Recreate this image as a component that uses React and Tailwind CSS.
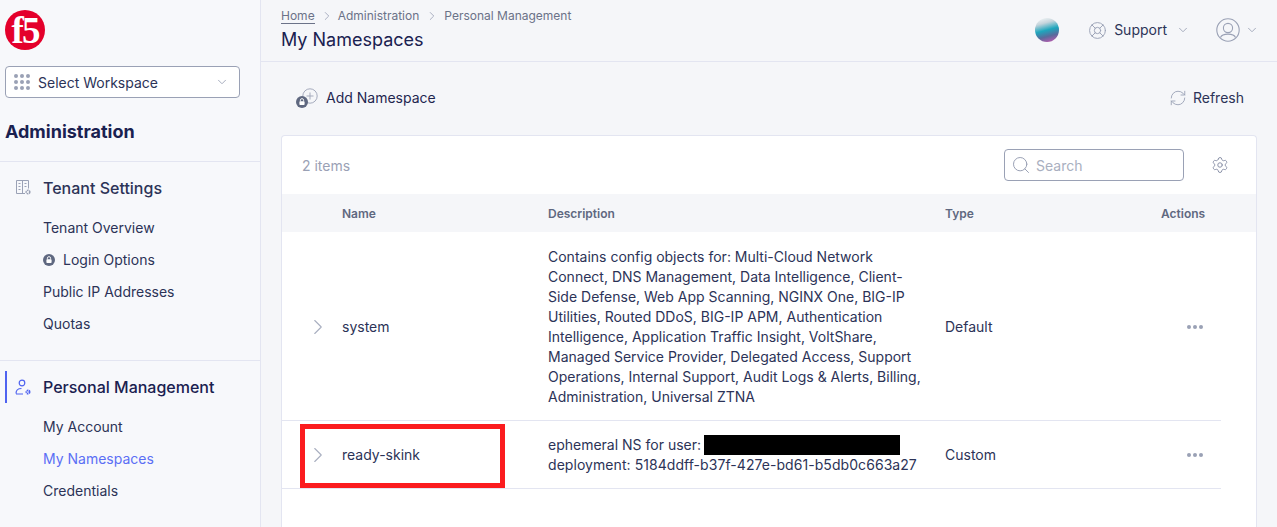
import React from 'react'
import { ChevronDown, ChevronRight, LifeBuoy, RefreshCw, Search, Settings } from 'lucide-react'

const LockBadge = ({ className }) => (
  <svg className={className} viewBox="0 0 12 12">
    <circle cx="6" cy="6" r="6" fill="#5f6880" />
    <rect x="3.4" y="5.2" width="5.2" height="3.8" rx="0.8" fill="#fff" />
    <path d="M4.4 5.4V4.2a1.6 1.6 0 0 1 3.2 0v1.2" fill="none" stroke="#fff" strokeWidth="0.9" />
  </svg>
)

const TenantIcon = () => (
  <svg className="h-[17px] w-[17px] shrink-0" viewBox="0 0 17 17" fill="none" stroke="#9aa1b5" strokeWidth="1">
    <path d="M10 14.5H1.5V1.5h12v8" />
    <path d="M7.5 1.5v13M3.5 4.5h2M3.5 7.5h2M3.5 10.5h2M9.5 4.5h2M9.5 7.5h2" />
    <circle cx="13" cy="13" r="1.8" strokeWidth="1.6" strokeDasharray="1.6 0.6" />
  </svg>
)

const PersonGearIcon = () => (
  <svg className="h-[17px] w-[17px] shrink-0" viewBox="0 0 17 17" fill="none" stroke="#4f63f0" strokeWidth="1.2">
    <circle cx="7" cy="4" r="2.8" />
    <path d="M1 14.5c0-3 2-5 5.5-5M1 15h7" />
    <circle cx="13" cy="13" r="1.6" strokeWidth="1.8" strokeDasharray="1.4 0.5" />
  </svg>
)

const UserCircleIcon = () => (
  <svg className="h-6 w-6" viewBox="0 0 24 24" fill="none" stroke="#9aa1b5" strokeWidth="1.1">
    <circle cx="12" cy="12" r="11.2" />
    <circle cx="12" cy="10" r="4.6" />
    <path d="M4.5 19.5c1-2.6 3.6-3.4 7.5-3.4s6.5.8 7.5 3.4" />
  </svg>
)

const AddLockIcon = () => (
  <div className="relative h-5 w-[22px] shrink-0">
    <svg className="absolute right-0 top-0 h-4 w-4" viewBox="0 0 16 16" fill="none" stroke="#a5abbd" strokeWidth="1">
      <circle cx="8" cy="8" r="7.2" />
      <path d="M8 4.5v7M4.5 8h7" />
    </svg>
    <LockBadge className="absolute bottom-0 left-0 h-3 w-3" />
  </div>
)

const Dots = () => (
  <div className="flex gap-[2px]">
    <span className="h-1 w-1 rounded-full bg-[#9aa1b5]" />
    <span className="h-1 w-1 rounded-full bg-[#9aa1b5]" />
    <span className="h-1 w-1 rounded-full bg-[#9aa1b5]" />
  </div>
)

const SubItem = ({ children, active }) => (
  <div className={`flex h-8 items-center pl-[43px] text-sm ${active ? 'text-[#5b6ff5]' : 'text-[#2c3357]'}`}>
    {children}
  </div>
)

const Sidebar = () => (
  <aside className="flex h-[527px] w-[261px] shrink-0 flex-col overflow-hidden border-r border-[#e3e5f1] bg-[#f7f8fb]">
    <div className="pl-[5px] pt-[10px]">
      <div className="flex h-10 w-10 items-center justify-center overflow-hidden rounded-full bg-[#e4002b] font-['Liberation_Serif',serif] text-[37px] font-bold leading-none tracking-[-2px] text-white">
        f5
      </div>
    </div>
    <div className="ml-[5px] mt-4 flex h-8 w-[235px] items-center rounded border border-[#9aa1b5] bg-white pl-2 pr-[10px]">
      <div className="grid w-4 grid-cols-3 gap-[2px]">
        {[...Array(9)].map((_, i) => (
          <span key={i} className="h-1 w-1 rounded-full bg-[#9aa1b5]" />
        ))}
      </div>
      <span className="ml-2 flex-1 pt-[2px] text-sm text-[#2c3357]">Select Workspace</span>
      <ChevronDown className="h-[14px] w-[14px] text-[#9aa1b5]" strokeWidth={1.5} />
    </div>
    <h2 className="mb-[17px] ml-[5px] mt-[22px] text-lg font-bold leading-[24px] text-[#1a2150]">Administration</h2>
    <div className="border-t border-[#e3e5f1] pb-[20px] pt-[9px]">
      <div className="flex h-[33px] items-center pl-[15px] text-base font-medium text-[#2c3357]">
        <TenantIcon />
        <span className="ml-[11px]">Tenant Settings</span>
      </div>
      <div className="mt-[8px]">
        <SubItem>Tenant Overview</SubItem>
        <SubItem>
          <LockBadge className="mr-2 h-3 w-3" />
          Login Options
        </SubItem>
        <SubItem>Public IP Addresses</SubItem>
        <SubItem>Quotas</SubItem>
      </div>
    </div>
    <div className="border-t border-[#e3e5f1] pt-[10px]">
      <div className="ml-[5px] flex h-[32px] items-center border-l-2 border-[#4f63f0] pl-[8px] text-base font-medium text-[#1a2150]">
        <PersonGearIcon />
        <span className="ml-[11px]">Personal Management</span>
      </div>
      <div className="mt-2">
        <SubItem>My Account</SubItem>
        <SubItem active>My Namespaces</SubItem>
        <SubItem>Credentials</SubItem>
      </div>
    </div>
  </aside>
)

const Header = () => (
  <header className="flex h-[62px] shrink-0 items-start justify-between border-b border-[#e3e5f1] pl-5 pr-[18px]">
    <div className="pt-[9px]">
      <div className="flex h-[14px] items-center text-xs text-[#6b7288]">
        <span className="border-b border-[#6b7288] leading-[14px]">Home</span>
        <ChevronRight className="ml-[5px] mr-1 h-[14px] w-[14px] text-[#9aa1b5]" strokeWidth={1.4} />
        <span>Administration</span>
        <ChevronRight className="ml-[6px] mr-[5px] h-[14px] w-[14px] text-[#9aa1b5]" strokeWidth={1.4} />
        <span>Personal Management</span>
      </div>
      <h1 className="mt-[4px] text-lg leading-[26px] text-[#1a2150]">My Namespaces</h1>
    </div>
    <div className="flex h-[60px] items-center">
      <div className="h-6 w-6 rounded-full bg-[linear-gradient(165deg,#f1f5f6_5%,#c6d4dc_25%,#1ea6bd_50%,#5a6a9c_72%,#d557b5_100%)]" />
      <LifeBuoy className="ml-[29px] h-[19px] w-[19px] text-[#9aa1b5]" strokeWidth={1.2} />
      <span className="ml-[7px] text-sm text-[#2c3357]">Support</span>
      <ChevronDown className="ml-[9px] h-[14px] w-[14px] text-[#9aa1b5]" strokeWidth={1.5} />
      <div className="ml-[26px]">
        <UserCircleIcon />
      </div>
      <ChevronDown className="ml-[5px] h-[14px] w-[14px] text-[#9aa1b5]" strokeWidth={1.5} />
    </div>
  </header>
)

const Toolbar = () => (
  <div className="flex h-[73px] shrink-0 items-center justify-between pb-[2px] pl-[35px] pr-[33px]">
    <div className="flex items-center text-sm text-[#1f2650]">
      <AddLockIcon />
      <span className="ml-[8px]">Add Namespace</span>
    </div>
    <div className="flex items-center text-sm text-[#2c3357]">
      <RefreshCw className="h-[18px] w-[18px] text-[#9aa1b5]" strokeWidth={1.2} />
      <span className="ml-[6px]">Refresh</span>
    </div>
  </div>
)

const rowGrid = 'grid grid-cols-[60px_206px_397px_216px_60px]'

const Table = () => (
  <div className="ml-5 mr-5 flex-1 rounded-t border border-b-0 border-[#e3e5f1] bg-white">
    <div className="flex h-[58px] items-center justify-between pl-5 pr-[27px]">
      <span className="pt-[2px] text-sm text-[#9aa1b5]">2 items</span>
      <div className="flex items-center">
        <div className="flex h-8 w-[180px] items-center rounded border border-[#9aa1b5] pl-[6px]">
          <Search className="h-5 w-5 text-[#9aa1b5]" strokeWidth={1.2} />
          <span className="ml-[5px] pt-[2px] text-sm text-[#a9afc0]">Search</span>
        </div>
        <Settings className="ml-[27px] h-[18px] w-[18px] text-[#8a91a8]" strokeWidth={1.3} />
      </div>
    </div>
    <div className={`${rowGrid} h-[38px] items-center bg-[#f5f6f9] pt-[2px] text-xs font-semibold text-[#5f6880]`}>
      <span />
      <span>Name</span>
      <span>Description</span>
      <span>Type</span>
      <span>Actions</span>
    </div>
    <div className="mr-[35px]">
      <div className={`${rowGrid} h-[189px] items-center border-b border-[#e3e5f1] pt-[2px] text-sm text-[#2c3357]`}>
        <ChevronRight className="ml-[23px] h-[26px] w-[26px] text-[#a9afc0]" strokeWidth={1} />
        <span>system</span>
        <p className="w-[380px] leading-5">
          Contains config objects for: Multi-Cloud Network Connect, DNS Management, Data Intelligence, Client-Side
          Defense, Web App Scanning, NGINX One, BIG-IP Utilities, Routed DDoS, BIG-IP APM, Authentication Intelligence,
          Application Traffic Insight, VoltShare, Managed Service Provider, Delegated Access, Support Operations,
          Internal Support, Audit Logs &amp; Alerts, Billing, Administration, Universal ZTNA
        </p>
        <span>Default</span>
        <div className="pl-[26px]">
          <Dots />
        </div>
      </div>
      <div className={`${rowGrid} h-[68px] items-center border-b border-[#e3e5f1] text-sm text-[#2c3357]`}>
        <ChevronRight className="ml-[23px] h-[26px] w-[26px] text-[#a9afc0]" strokeWidth={1} />
        <span>ready-skink</span>
        <p className="whitespace-nowrap leading-5">
          ephemeral NS for user: <br />
          <span className="tracking-[0.06px]">deployment: 5184ddff-b37f-427e-bd61-b5db0c663a27</span>
        </p>
        <span>Custom</span>
        <div className="pl-[26px]">
          <Dots />
        </div>
      </div>
    </div>
  </div>
)

export default function App() {
  return (
    <div className="relative flex h-[527px] w-[1277px] overflow-hidden bg-[#f5f6f9] font-['Inter',sans-serif]">
      <Sidebar />
      <main className="flex min-w-0 flex-1 flex-col">
        <Header />
        <Toolbar />
        <Table />
      </main>
      {/* red highlight and redaction painted over the screenshot */}
      <div className="pointer-events-none absolute left-[300px] top-[424px] h-[64px] w-[205px] border-[5px] border-[#fb1c1f]" />
      <div className="pointer-events-none absolute left-[704px] top-[435px] h-5 w-[196px] bg-black" />
    </div>
  )
}
